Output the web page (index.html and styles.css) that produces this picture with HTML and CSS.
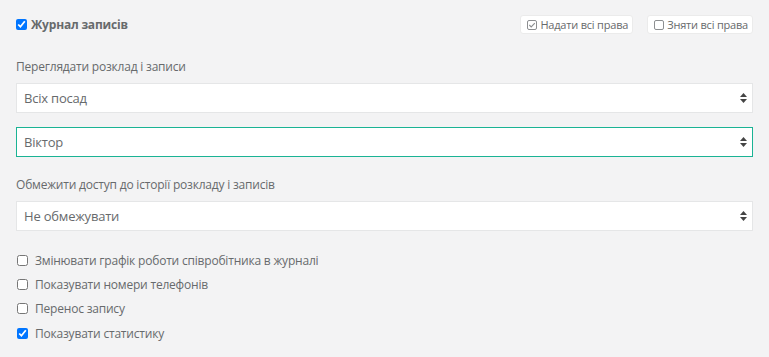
FILE: index.html
```html
<!DOCTYPE html>
<html lang="uk">
<head>
<meta charset="utf-8">
<link rel="stylesheet" href="styles.css">
</head>
<body>
<div class="panel">
  <div class="header">
    <label class="title"><input type="checkbox" class="cb" checked> Журнал записів</label>
    <div class="actions">
      <button class="btn"><svg width="10" height="10" viewBox="0 0 10 10"><rect x="0.5" y="0.5" width="9" height="9" rx="1.5" fill="none" stroke="#8d8f91"/><path d="M2.3 5 L4.2 6.9 L7.8 3.1" fill="none" stroke="#8d8f91" stroke-width="1.1"/></svg>Надати всі права</button>
      <button class="btn"><svg width="10" height="10" viewBox="0 0 10 10"><rect x="0.5" y="0.5" width="9" height="9" rx="1.5" fill="none" stroke="#8d8f91"/></svg>Зняти всі права</button>
    </div>
  </div>

  <div class="field first">
    <div class="label">Переглядати розклад і записи</div>
    <div class="select">
      <span>Всіх посад</span>
      <svg class="arrow" width="7" height="10" viewBox="0 0 7 10"><path d="M3.5 0 L7 4 H0 Z M0 6 H7 L3.5 10 Z" fill="#444"/></svg>
    </div>
    <div class="select active">
      <span>Віктор</span>
      <svg class="arrow" width="7" height="10" viewBox="0 0 7 10"><path d="M3.5 0 L7 4 H0 Z M0 6 H7 L3.5 10 Z" fill="#444"/></svg>
    </div>
  </div>

  <div class="field second">
    <div class="label">Обмежити доступ до історії розкладу і записів</div>
    <div class="select">
      <span>Не обмежувати</span>
      <svg class="arrow" width="7" height="10" viewBox="0 0 7 10"><path d="M3.5 0 L7 4 H0 Z M0 6 H7 L3.5 10 Z" fill="#444"/></svg>
    </div>
  </div>

  <div class="checks">
    <label class="check"><input type="checkbox" class="cb"> Змінювати графік роботи співробітника в журналі</label>
    <label class="check"><input type="checkbox" class="cb"> Показувати номери телефонів</label>
    <label class="check"><input type="checkbox" class="cb"> Перенос запису</label>
    <label class="check"><input type="checkbox" class="cb" checked> Показувати статистику</label>
  </div>
</div>
</body>
</html>
```

FILE: styles.css
```css
html, body {
  margin: 0;
  padding: 0;
  background: #f3f3f4;
}
body {
  font-family: "Open Sans", "Noto Sans", sans-serif;
  font-size: 12px;
  letter-spacing: -0.2px;
  color: #676a6c;
}
.panel {
  padding: 15px 16px 0 16px;
}
.header {
  display: flex;
  justify-content: space-between;
  align-items: center;
  height: 19px;
}
.title {
  display: flex;
  align-items: center;
  font-weight: 700;
  font-size: 12px;
  color: #676a6c;
}
.cb {
  width: 11px;
  height: 11px;
  margin: 0 4px 0 0;
}
.actions {
  display: flex;
  gap: 14px;
}
.btn {
  display: flex;
  align-items: center;
  gap: 3px;
  height: 19px;
  padding: 0 4px 0 6px;
  background: #fff;
  border: 1px solid #ebebeb;
  border-radius: 3px;
  font-family: "Open Sans", "Noto Sans", sans-serif;
  font-size: 11px;
  letter-spacing: -0.2px;
  color: #676a6c;
}
.field.first {
  margin-top: 24px;
}
.field.second {
  margin-top: 19px;
}
.label {
  line-height: 18px;
  margin-bottom: 7px;
}
.select {
  display: flex;
  justify-content: space-between;
  align-items: center;
  height: 30px;
  box-sizing: border-box;
  background: #fff;
  border: 1px solid #e5e6e7;
  padding: 0 5px 0 7px;
  font-size: 13px;
  color: #676a6c;
}
.select + .select {
  margin-top: 14px;
}
.select.active {
  border-color: #1ab394;
}
.checks {
  margin-top: 17px;
  display: flex;
  flex-direction: column;
}
.check {
  display: flex;
  align-items: center;
  height: 24.4px;
}
.check .cb {
  margin: 0 7px 0 1px;
}
```
